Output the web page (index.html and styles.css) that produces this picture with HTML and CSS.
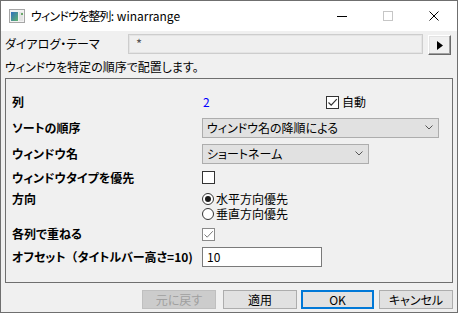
FILE: index.html
```html
<!DOCTYPE html>
<html lang="ja">
<head>
<meta charset="utf-8">
<link rel="stylesheet" href="styles.css">
</head>
<body>
<div class="window">
  <div class="titlebar">
    <svg class="app-icon" width="16" height="14" viewBox="0 0 16 14">
      <defs>
        <linearGradient id="ig" x1="0" y1="0" x2="1" y2="1">
          <stop offset="0" stop-color="#2f6fc0"/>
          <stop offset="1" stop-color="#63b56d"/>
        </linearGradient>
      </defs>
      <rect x="0.5" y="0.5" width="15" height="13" fill="#f2f2f2" stroke="#a6a6a6"/>
      <rect x="2" y="3" width="7" height="9" fill="url(#ig)"/>
      <rect x="10" y="3" width="4" height="9" fill="#e4e4e4"/>
      <rect x="12" y="4" width="2" height="2" fill="#6aa86a"/>
    </svg>
    <span class="title"><span class="tight">ウィンドウを整列</span>: winarrange</span>
    <div class="caption-btns">
      <div class="cap"><svg width="10" height="10" viewBox="0 0 10 10"><line x1="0" y1="5.5" x2="10" y2="5.5" stroke="#000" stroke-width="1"/></svg></div>
      <div class="cap"><svg width="10" height="10" viewBox="0 0 10 10"><rect x="0.5" y="0.5" width="9" height="9" fill="none" stroke="#c6c6c6" stroke-width="1"/></svg></div>
      <div class="cap"><svg width="10" height="10" viewBox="0 0 10 10"><path d="M0.5 0.5 L9.5 9.5 M9.5 0.5 L0.5 9.5" stroke="#000" stroke-width="1"/></svg></div>
    </div>
  </div>
  <div class="content">
    <div class="theme-row">
      <span class="theme-label">ダイアログ・テーマ</span>
      <div class="theme-input">*</div>
      <div class="arrow-btn"><svg width="6" height="9" viewBox="0 0 6 9"><path d="M0 0 L6 4.5 L0 9 Z" fill="#000"/></svg></div>
    </div>
    <div class="desc">ウィンドウを特定の順序で配置します。</div>
    <div class="group">
      <div class="lbl">列</div>
      <div class="val cols">
        <span class="num">2</span>
        <span class="check-item"><span class="cb dark"><svg width="11" height="11" viewBox="0 0 11 11"><path d="M1.5 5.5 L4.2 8.2 L9.8 2.2" fill="none" stroke="#333" stroke-width="1.2"/></svg></span><span>自動</span></span>
      </div>

      <div class="lbl">ソートの順序</div>
      <div class="val"><div class="select wide"><span>ウィンドウ名の降順による</span><svg width="8" height="5" viewBox="0 0 8 5"><path d="M0.5 0.5 L4 4 L7.5 0.5" fill="none" stroke="#555" stroke-width="1"/></svg></div></div>

      <div class="lbl">ウィンドウ名</div>
      <div class="val"><div class="select narrow"><span>ショートネーム</span><svg width="8" height="5" viewBox="0 0 8 5"><path d="M0.5 0.5 L4 4 L7.5 0.5" fill="none" stroke="#555" stroke-width="1"/></svg></div></div>

      <div class="lbl">ウィンドウタイプを優先</div>
      <div class="val"><span class="cb dark"></span></div>

      <div class="lbl top">方向</div>
      <div class="val radios">
        <div class="radio-item"><span class="radio on"></span><span>水平方向優先</span></div>
        <div class="radio-item"><span class="radio"></span><span>垂直方向優先</span></div>
      </div>

      <div class="lbl">各列で重ねる</div>
      <div class="val"><span class="cb light"><svg width="11" height="11" viewBox="0 0 11 11"><path d="M1.5 5.5 L4.2 8.2 L9.8 2.2" fill="none" stroke="#7a7a7a" stroke-width="1"/></svg></span></div>

      <div class="lbl">オフセット<span class="fw">（</span>タイトルバー高さ=10)</div>
      <div class="val"><div class="textbox">10</div></div>
    </div>
    <div class="buttons">
      <div class="btn disabled">元に戻す</div>
      <div class="btn apply">適用</div>
      <div class="btn ok">OK</div>
      <div class="btn">キャンセル</div>
    </div>
  </div>
</div>
</body>
</html>
```
FILE: styles.css
```css
* { box-sizing: border-box; }
html, body { margin: 0; padding: 0; }
body {
  font-family: "Noto Sans CJK JP", "Noto Sans", sans-serif;
  font-size: 12px;
  font-feature-settings: "palt";
  color: #000;
  background: #f0f0f0;
}
.window {
  width: 458px;
  height: 313px;
  border: 1px solid #6f6f6f;
  background: #f0f0f0;
  display: flex;
  flex-direction: column;
}
.titlebar {
  height: 30px;
  background: #fff;
  display: flex;
  align-items: center;
  flex-shrink: 0;
}
.app-icon { margin-left: 8px; margin-right: 6px; margin-top: -1px; }
.title { line-height: 16px; flex: 1; }
.tight { letter-spacing: -0.8px; }
.caption-btns { display: flex; height: 30px; }
.cap {
  width: 46px;
  height: 30px;
  display: flex;
  align-items: center;
  justify-content: center;
}
.content {
  padding: 3px 4px 0 4px;
  display: flex;
  flex-direction: column;
}
.theme-row {
  height: 21px;
  display: flex;
  align-items: flex-start;
}
.theme-label { width: 123px; line-height: 20px; }
.theme-input {
  width: 295px;
  height: 20px;
  border: 1px solid #cdcdcd;
  box-shadow: inset 0 0 0 1px #e4e4e4;
  background: #efefef;
  color: #555;
  font-size: 13px;
  line-height: 18px;
  padding-left: 7px;
}
.arrow-btn {
  margin-left: 5px;
  margin-top: 1px;
  width: 23px;
  height: 20px;
  background: #f0f0f0;
  border-top: 1px solid #fff;
  border-left: 1px solid #fff;
  border-right: 1px solid #696969;
  border-bottom: 1px solid #696969;
  box-shadow: inset -1px -1px 0 #a0a0a0, inset 1px 1px 0 #e3e3e3;
  display: flex;
  align-items: center;
  justify-content: center;
}
.desc {
  margin-top: 3px;
  height: 18px;
  line-height: 18px;
}
.group {
  margin-top: 2px;
  height: 205px;
  border: 1px solid #6f6f6f;
  padding: 13px 6px 0 6px;
  display: grid;
  grid-template-columns: 190px 1fr;
  grid-template-rows: 20px 21px 21px 17px 30px 16px 20px;
  row-gap: 5px;
  align-items: center;
}
.lbl { font-weight: bold; line-height: 16px; white-space: nowrap; }
.lbl.top { align-self: start; line-height: 15px; }
.fw { font-feature-settings: normal; }
.val { display: flex; align-items: center; line-height: 16px; }
.num { color: #0000ff; width: 124px; padding-left: 1px; }
.check-item { display: flex; align-items: center; }
.check-item span:last-child { margin-left: 3px; }
.cb {
  width: 13px;
  height: 13px;
  background: #fff;
  display: inline-flex;
  align-items: center;
  justify-content: center;
}
.cb.dark { border: 1px solid #333; }
.cb.light { border: 1px solid #8a8a8a; }
.select {
  height: 20px;
  background: #e1e1e1;
  border: 1px solid #adadad;
  display: flex;
  align-items: center;
  justify-content: space-between;
  padding: 0 5px 0 4px;
}
.select.wide { width: 237px; }
.select.narrow { width: 167px; }
.radios { flex-direction: column; align-items: flex-start; align-self: start; }
.radio-item { height: 15px; line-height: 15px; display: flex; align-items: center; }
.radio {
  width: 12px;
  height: 12px;
  border-radius: 50%;
  border: 1px solid #333;
  background: #fff;
  margin-right: 2px;
  display: inline-flex;
  align-items: center;
  justify-content: center;
}
.radio.on::after {
  content: "";
  width: 6px;
  height: 6px;
  border-radius: 50%;
  background: #1a1a1a;
}
.textbox {
  width: 120px;
  height: 20px;
  border: 1px solid #7a7a7a;
  background: #fff;
  padding-left: 4px;
  line-height: 18px;
}
.buttons {
  margin-top: 7px;
  display: flex;
  justify-content: flex-end;
}
.btn {
  width: 74px;
  height: 19px;
  background: #e1e1e1;
  border: 1px solid #adadad;
  display: flex;
  align-items: center;
  justify-content: center;
  line-height: 16px;
}
.btn.disabled {
  background: #cccccc;
  border-color: #bfbfbf;
  color: #a0a0a0;
  margin-right: 7px;
}
.btn.apply { margin-right: 4px; }
.btn.ok {
  width: 73px;
  border: 2px solid #0078d7;
  margin-right: 5px;
}
```
